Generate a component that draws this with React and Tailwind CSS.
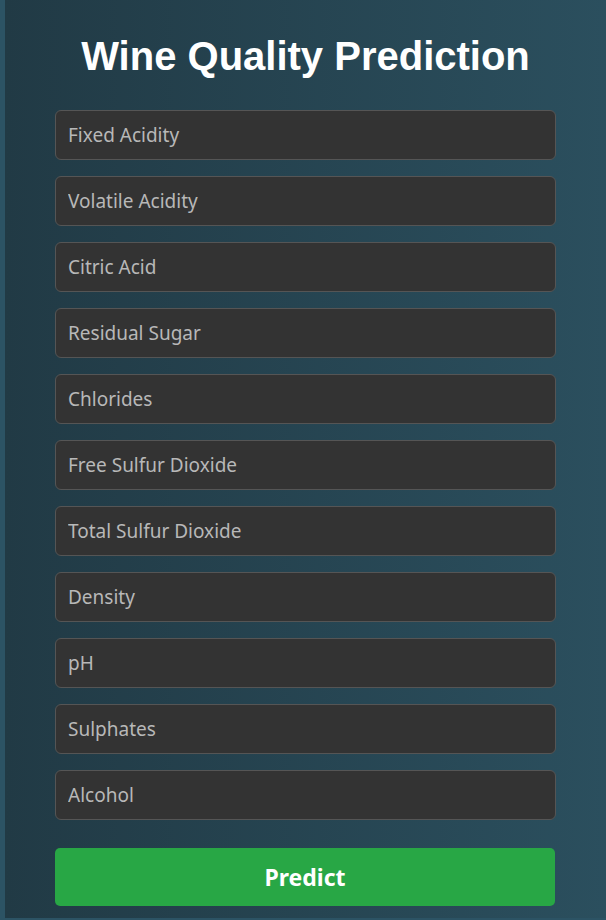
import React from "react";

const fields = [
  "Fixed Acidity",
  "Volatile Acidity",
  "Citric Acid",
  "Residual Sugar",
  "Chlorides",
  "Free Sulfur Dioxide",
  "Total Sulfur Dioxide",
  "Density",
  "pH",
  "Sulphates",
  "Alcohol",
];

const App = () => {
  return (
    <div className="min-h-[920px] bg-[#2c5364] pl-[5px] pb-[2px]">
      <div className="h-[918px] bg-[linear-gradient(to_right,#213a45,#2b4f5e)] px-[50px] pt-[33px]">
        <h1 className="text-center text-[40px] font-bold text-white font-['Liberation_Sans',Arial,sans-serif] leading-[46px] mb-[31px]">
          Wine Quality Prediction
        </h1>
        <form className="flex flex-col gap-4">
          {fields.map((f) => (
            <input
              key={f}
              type="text"
              placeholder={f}
              className="h-[50px] w-full rounded-md border border-[#555] bg-[#333] px-3 text-[19px] text-white placeholder:text-[#b8b8b8] font-['Noto_Sans',sans-serif] outline-none"
            />
          ))}
          <button
            type="button"
            className="mt-[12px] h-[58px] w-[500px] rounded-[5px] bg-[#28a745] text-[23px] font-bold text-white font-['Noto_Sans',sans-serif]"
          >
            Predict
          </button>
        </form>
      </div>
    </div>
  );
};

export default App;
